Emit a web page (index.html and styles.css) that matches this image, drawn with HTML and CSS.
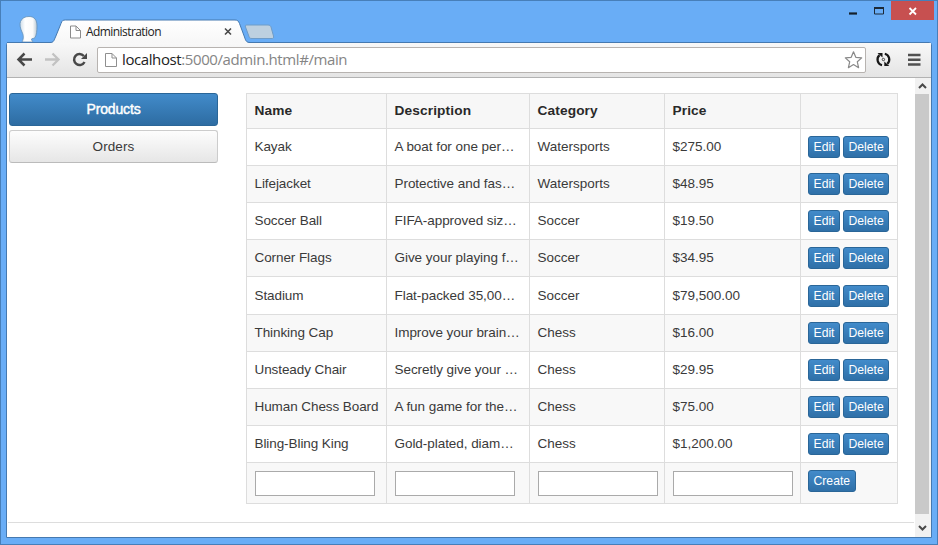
FILE: index.html
```html
<!DOCTYPE html>
<html lang="en">
<head>
<meta charset="utf-8">
<title>Administration</title>
<link rel="stylesheet" href="styles.css">
</head>
<body>
<div class="window">
  <header class="titlebar">
    <svg class="chrome-art" width="300" height="43" viewBox="0 0 300 43">
      <defs>
        <linearGradient id="tab" x1="0" y1="0" x2="0" y2="1"><stop offset="0" stop-color="#fff"/><stop offset="1" stop-color="#f7f7f7"/></linearGradient>
        <linearGradient id="head" x1="0" y1="0" x2="1" y2="0"><stop offset="0" stop-color="#cfdde8"/><stop offset=".3" stop-color="#fff"/><stop offset=".75" stop-color="#fafafa"/><stop offset="1" stop-color="#b9c8d4"/></linearGradient>
      </defs>
      <path d="M22 42C24 38 23.500 35 22 32C20 28 19.500 24 20.500 21.500C22 18 25 16.500 29 16.500C34.500 16.500 37 20 37 26C37 31 36.500 35 35 37.500C34 39 32 38 31.500 39C31.500 40.500 32.500 41 33 42Z" fill="url(#head)" stroke="#6590b8" stroke-width=".8"/>
      <path d="M50 43C54 42.500 54 40 55.500 37L61 23.500C62 20.500 63 20 65.500 20H235C237.500 20 238.500 21 239.500 23.500L244.500 37C245.500 40 246 42.500 250 43Z" fill="url(#tab)"/>
      <path d="M7 42.500H50C54 42.500 54 40 55.500 37L61 23.500C62 20.500 63 20 65.500 20H235C237.500 20 238.500 21 239.500 23.500L244.500 37C245.500 40 246 42.500 250 42.500H300" fill="none" stroke="#4579b0"/>
      <path d="M247 25H268C270 25 270.500 26 271 27L273.500 36C274 38 273 38.500 272 38.500H252C250 38.500 249.500 38 249 36.500L245.500 27C245 25.500 245.500 25 247 25Z" fill="#bdd0e0" stroke="#6f9cc8"/>
      <path d="M70.500 26H76L80.500 30.500V38H70.500ZM76 26V30.500H80.500" fill="#fff" stroke="#8b8b8b"/>
      <path d="M225 28.500L231 34.500M231 28.500L225 34.500" stroke="#484848" stroke-width="1.600"/>
    </svg>
    <span class="tab-title">Administration</span>
    <svg class="controls" width="92" height="20" viewBox="0 0 92 20">
      <path d="M3 13.500H11" stroke="#15202b" stroke-width="2.200"/>
      <path d="M28.500 7.500H37.500V14H28.500Z" fill="none" stroke="#1d2a38"/><path d="M28 8H38" stroke="#1d2a38" stroke-width="2"/>
      <path d="M45 1H88V20H45Z" fill="#c75050"/>
      <path d="M63.500 8L70 14.500M70 8L63.500 14.500" stroke="#fff" stroke-width="1.800"/>
    </svg>
  </header>
  <div class="panel">
    <div class="toolbar">
      <svg width="90" height="34" viewBox="7 43 90 34" fill="none">
        <path d="M32 59.500H19M24.500 53.500L18.500 59.500L24.500 65.500" stroke="#484848" stroke-width="2.500"/>
        <path d="M45 59.500H58M52.500 53.500L58.500 59.500L52.500 65.500" stroke="#c2c2c2" stroke-width="2.300"/>
        <path d="M84.500 62A5.500 5.500 0 1 1 83.800 56" stroke="#484848" stroke-width="2.500"/><path d="M87 53V59H81Z" fill="#484848"/>
      </svg>
      <div class="address">
        <svg width="12" height="16" viewBox="0 0 12 16"><path d="M.5 1.500H7L11.500 6V14.500H.5ZM7 1.500V6H11.500" fill="#fff" stroke="#8f8f8f"/></svg>
        <span class="url"><b>localhost</b>:5000/admin.html#/main</span>
        <svg class="star" width="20" height="20" viewBox="0 0 20 20"><path d="M10.500 1.800L12.800 7.300L18.700 7.900L14.300 11.800L15.600 17.700L10.500 14.600L5.400 17.700L6.700 11.800L2.300 7.900L8.200 7.300Z" fill="#fff" stroke="#898989" stroke-width="1.200" stroke-linejoin="round"/></svg>
      </div>
      <svg width="65" height="34" viewBox="866 43 65 34" fill="none">
        <path d="M882 65.200A5.800 5.800 0 0 1 879.500 55.200M884.800 53.800A5.800 5.800 0 0 1 887.300 63.800" stroke="#171717" stroke-width="2.200"/>
        <path d="M877.500 53H882.500V57.500ZM889.300 66H884.300V61.500Z" fill="#171717"/><circle cx="883.400" cy="59.500" r="1.200" stroke="#333" stroke-width=".9"/>
        <path d="M908 55H920.500M908 59.700H920.500M908 64.500H920.500" stroke="#505050" stroke-width="2.500"/>
      </svg>
    </div>
    <div class="viewport">
      <main class="page">
        <div class="columns">
          <nav class="menu"><a class="nav active">Products</a><a class="nav">Orders</a></nav>
          <table class="products">
            <colgroup><col class="c1"><col class="c2"><col class="c3"><col class="c4"><col class="c5"></colgroup>
            <thead><tr><th>Name</th><th>Description</th><th>Category</th><th>Price</th><th></th></tr></thead>
            <tbody>
              <tr><td>Kayak</td><td>A boat for one per…</td><td>Watersports</td><td>$275.00</td><td><div class="actions"><button>Edit</button><button>Delete</button></div></td></tr>
              <tr><td>Lifejacket</td><td>Protective and fas…</td><td>Watersports</td><td>$48.95</td><td><div class="actions"><button>Edit</button><button>Delete</button></div></td></tr>
              <tr><td>Soccer Ball</td><td>FIFA-approved siz…</td><td>Soccer</td><td>$19.50</td><td><div class="actions"><button>Edit</button><button>Delete</button></div></td></tr>
              <tr><td>Corner Flags</td><td>Give your playing f…</td><td>Soccer</td><td>$34.95</td><td><div class="actions"><button>Edit</button><button>Delete</button></div></td></tr>
              <tr class="tall"><td>Stadium</td><td>Flat-packed 35,00…</td><td>Soccer</td><td>$79,500.00</td><td><div class="actions"><button>Edit</button><button>Delete</button></div></td></tr>
              <tr><td>Thinking Cap</td><td>Improve your brain…</td><td>Chess</td><td>$16.00</td><td><div class="actions"><button>Edit</button><button>Delete</button></div></td></tr>
              <tr><td>Unsteady Chair</td><td>Secretly give your …</td><td>Chess</td><td>$29.95</td><td><div class="actions"><button>Edit</button><button>Delete</button></div></td></tr>
              <tr><td>Human Chess Board</td><td>A fun game for the…</td><td>Chess</td><td>$75.00</td><td><div class="actions"><button>Edit</button><button>Delete</button></div></td></tr>
              <tr><td>Bling-Bling King</td><td>Gold-plated, diam…</td><td>Chess</td><td>$1,200.00</td><td><div class="actions"><button>Edit</button><button>Delete</button></div></td></tr>
              <tr class="create"><td><input></td><td><input></td><td><input></td><td><input></td><td><div class="actions"><button>Create</button></div></td></tr>
            </tbody>
          </table>
        </div>
        <hr>
      </main>
      <div class="scrollbar">
        <svg width="15" height="16" viewBox="0 0 15 16"><path d="M4 10L7.500 6.500L11 10" fill="none" stroke="#484848" stroke-width="2"/></svg>
        <div class="thumb"></div>
        <svg width="15" height="23" viewBox="0 0 15 23"><path d="M4 12L7.500 15.500L11 12" fill="none" stroke="#484848" stroke-width="2"/></svg>
      </div>
    </div>
  </div>
</div>
</body>
</html>
```

FILE: styles.css
```css
* { box-sizing: border-box; }
body { margin: 0; font: 13.5px/18px "Liberation Sans", Arial, sans-serif; color: #3a3a3a; }
.window { width: 938px; height: 545px; background: #69adf6; border: 1px solid #477fb9; display: flex; flex-direction: column; }
.titlebar { height: 41px; position: relative; flex: none; }
.chrome-art { position: absolute; left: -1px; top: -1px; z-index: 1; }
.tab-title { position: absolute; left: 85px; top: 22px; z-index: 2; font: 12px/18px "Open Sans", sans-serif; letter-spacing: -.57px; color: #222; }
.controls { position: absolute; right: -1px; top: -1px; }
.panel { margin: 0 5px 6px; flex: 1; min-height: 0; display: flex; flex-direction: column; background: #fff; border: 1px solid #4579b0; border-radius: 3px 3px 0 0; }
.toolbar { height: 35px; flex: none; display: flex; align-items: center; background: linear-gradient(#f8f8f8, #e4e4e4); border-bottom: 1px solid #b2b2b2; }
.address { flex: 1; height: 26px; display: flex; align-items: center; background: #fff; border: 1px solid #b7b3b0; border-radius: 2px; padding: 0 2px 0 7px; }
.url { margin-left: 5px; flex: 1; font: 15px/22px "Open Sans", sans-serif; letter-spacing: -.4px; color: #858585; white-space: nowrap; padding-bottom: 2px; }
.url b { font-weight: 400; color: #222; }
.viewport { flex: 1; min-height: 0; display: flex; }
.page { flex: 1; padding: 15px 1px 0 2px; }
.columns { display: flex; align-items: flex-start; gap: 28px; }
.menu { width: 209px; display: flex; flex-direction: column; gap: 4px; }
.nav { height: 33px; border: 1px solid #ccc; border-bottom-color: #bbb; border-radius: 3px; background: linear-gradient(#fdfdfd, #e6e6e6); text-align: center; line-height: 31px; letter-spacing: .1px; }
.nav.active { color: #fff; border-color: #2a6698; background: linear-gradient(#428bca, #2d6ca2); -webkit-text-stroke: .45px #fff; font-size: 14px; letter-spacing: -.15px; }
.products { width: 652px; table-layout: fixed; border-collapse: collapse; }
.c1 { width: 140px; } .c2 { width: 143px; } .c3 { width: 135px; } .c4 { width: 136px; } .c5 { width: 97px; }
.products th, .products td { border: 1px solid #ddd; padding: 0 0 0 7.500px; text-align: left; white-space: nowrap; vertical-align: middle; }
.products th { height: 35px; background: #f7f7f7; letter-spacing: .12px; font-size: 13.700px; color: #292929; }
.products td { height: 37px; }
.products td:first-child { letter-spacing: -.08px; }
.products td:nth-child(2) { letter-spacing: -.05px; }
.products .tall td { height: 38px; }
.products .create td { height: 41px; }
.products td:last-child { padding-left: 7px; }
tbody tr:nth-child(even) td { background: #f8f8f8; }
.actions { display: flex; gap: 3px; }
button { height: 22px; padding: 0 4.500px; border: 1px solid #2a6698; border-radius: 3px; background: linear-gradient(#428bca, #2f70a8); color: #fff; font: 12.200px/18px "Liberation Sans", Arial, sans-serif; letter-spacing: 0; }
.create .actions { padding-bottom: 4px; }
input { display: block; width: 120px; height: 25px; border: 1px solid #aaa; background: #fff; padding: 0; }
hr { margin: 18px 0 0 -1px; border: 0; border-top: 1px solid #ddd; }
.scrollbar { width: 16px; display: flex; flex-direction: column; background: #f1f1f1; }
.thumb { flex: 1; background: #c9c9c9; width: 14px; }
```
